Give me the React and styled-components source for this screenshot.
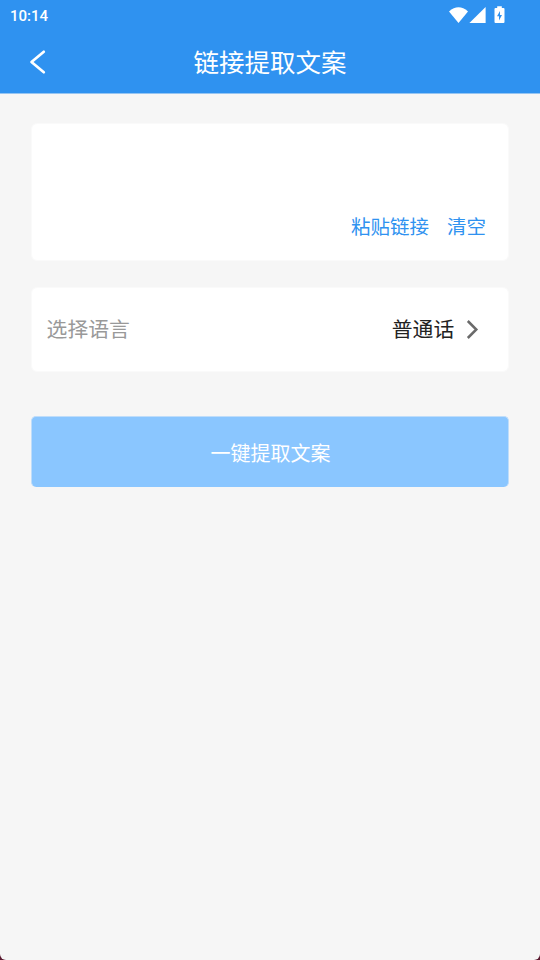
import React from "react";
import styled, { createGlobalStyle } from "styled-components";

const GlobalStyle = createGlobalStyle`
  * {
    box-sizing: border-box;
  }

  body {
    margin: 0;
    background: #5a1a30;
    font-family: Roboto, "Noto Sans CJK SC", sans-serif;
  }
`;

const Screen = styled.div`
  height: 960px;
  overflow: hidden;
  background: #f6f6f6;
  border-radius: 0 0 6px 6px;
`;

const Header = styled.header`
  height: 94px;
  border-bottom: 1px solid #96c5f2;
  background: #2f92f0;
  color: #fff;
`;

const StatusBar = styled.div`
  display: flex;
  justify-content: space-between;
  height: 31px;
  padding: 0 35px 0 10px;
`;

const Clock = styled.span`
  font-size: 15px;
  font-weight: 500;
  line-height: 32px;
`;

const StatusIcons = styled.svg`
  width: 56px;
  height: 31px;
`;

const TitleBar = styled.div`
  display: grid;
  grid-template-columns: 76px 1fr 76px;
  height: 62px;
`;

const BackButton = styled.button`
  display: flex;
  height: 62px;
  padding: 0 0 0 28px;
  align-items: center;
  border: 0;
  background: none;
  color: inherit;
`;

const Title = styled.h1`
  margin: 0;
  font-size: 25.5px;
  font-weight: 400;
  line-height: 64px;
  text-align: center;
`;

const Content = styled.main`
  display: flex;
  flex-direction: column;
  padding: 29px 31px 0;
`;

const Card = styled.section`
  display: flex;
  border: 1px solid #fafafa;
  border-radius: 6px;
  background: #fff;
`;

const LinkCard = styled(Card)`
  justify-content: flex-end;
  align-items: flex-end;
  gap: 18px;
  height: 138px;
  padding: 0 22px 17px;
`;

const TextButton = styled.button`
  padding: 0;
  border: 0;
  background: none;
  color: #2f92f0;
  font: inherit;
  font-size: 19.5px;
  line-height: 30px;
`;

const LanguageRow = styled(Card)`
  align-items: center;
  justify-content: space-between;
  height: 85px;
  margin-top: 26px;
  padding: 1px 29px 0 14.6px;
  font-size: 20.8px;
  line-height: 30px;
`;

const Label = styled.span`
  color: #999;
`;

const Value = styled.span`
  display: flex;
  align-items: center;
  gap: 10.8px;
  color: #222;
`;

const SubmitButton = styled.button`
  height: 71px;
  margin-top: 44px;
  padding: 0 0 0 1px;
  border: 1px solid #bfddfa;
  border-bottom: 0;
  border-radius: 5px;
  background: #8ac6ff;
  color: #fff;
  font: inherit;
  font-size: 20px;
`;

const Arrow = styled.svg`
  display: block;
  fill: none;
  stroke: ${(props) => props.$color};
`;

const RowArrow = styled(Arrow)`
  margin-bottom: 2px;
`;

function DeviceStatus() {
  return (
    <StatusIcons viewBox="0 0 56 31" fill="currentColor">
      <path d="M0 11.4Q9.5 3 19 11.4L9.5 23Z" />
      <path d="M20.4 23L36.6 7V23Z" />
      <path
        fillRule="evenodd"
        d="M48.2 6.3h4.6V8h1.7q1 0 1 1v13q0 1-1 1h-8q-1 0-1-1V9q0-1 1-1h1.7zM51 11L48 16.2H50V20.5L53 14.9H51z"
      />
    </StatusIcons>
  );
}

export default function App() {
  return (
    <>
      <GlobalStyle />
      <Screen>
        <Header>
          <StatusBar>
            <Clock>10:14</Clock>
            <DeviceStatus />
          </StatusBar>
          <TitleBar>
            <BackButton aria-label="返回">
              <Arrow
                width="20"
                height="26"
                $color="#fff"
                strokeWidth="2.7"
                strokeLinecap="round"
                strokeLinejoin="round"
              >
                <polyline points="15.8,2.8 3.5,13 15.8,23.2" />
              </Arrow>
            </BackButton>
            <Title>链接提取文案</Title>
          </TitleBar>
        </Header>
        <Content>
          <LinkCard>
            <TextButton>粘贴链接</TextButton>
            <TextButton>清空</TextButton>
          </LinkCard>
          <LanguageRow>
            <Label>选择语言</Label>
            <Value>
              普通话
              <RowArrow
                width="14"
                height="20"
                $color="#6a6a6a"
                strokeWidth="2.5"
              >
                <polyline points="2.8,2 11.3,10.5 2.8,19" />
              </RowArrow>
            </Value>
          </LanguageRow>
          <SubmitButton>一键提取文案</SubmitButton>
        </Content>
      </Screen>
    </>
  );
}
